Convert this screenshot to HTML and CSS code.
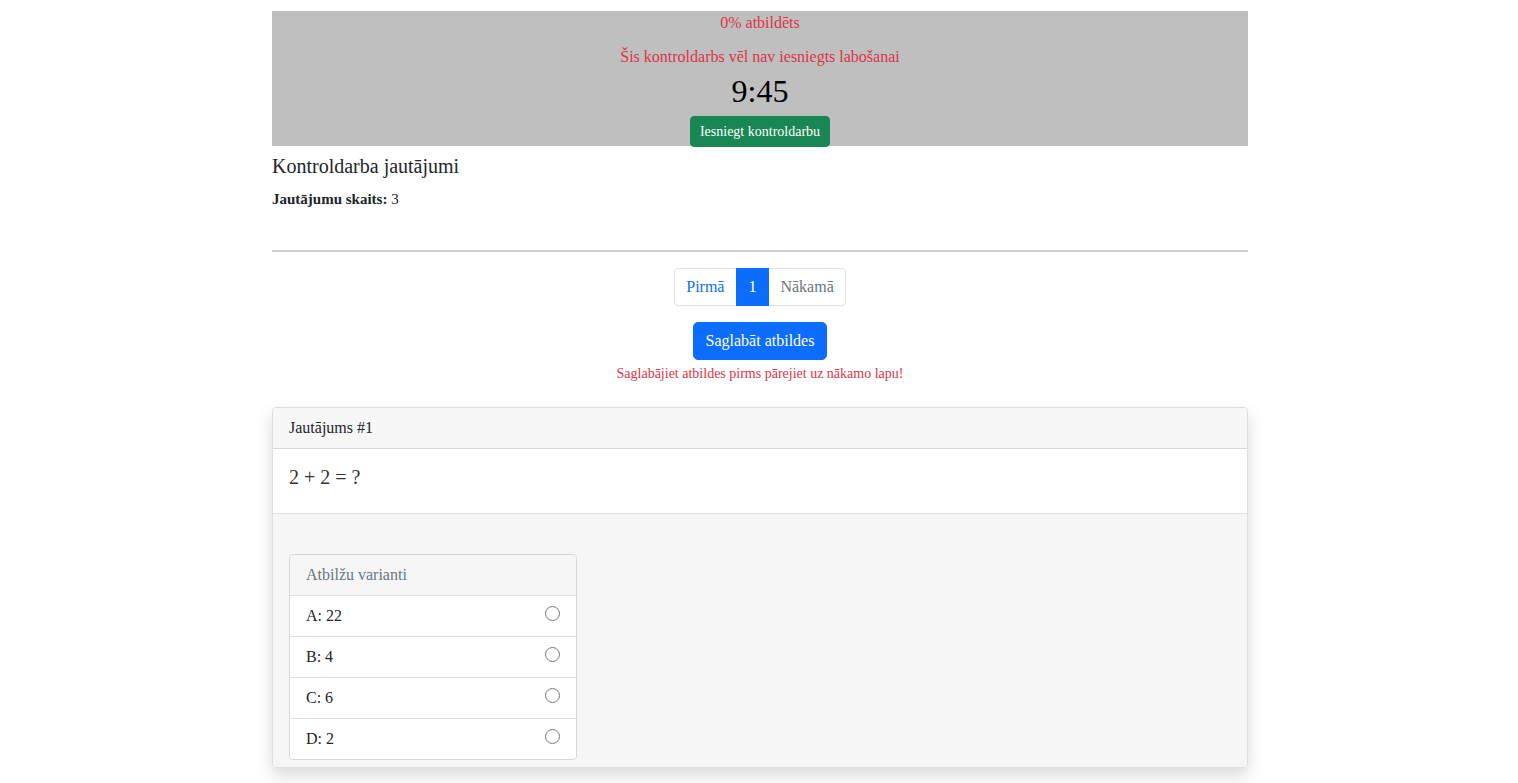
FILE: index.html
```html
<!DOCTYPE html>
<html lang="lv">
<head>
    <meta charset="UTF-8">
    <meta name="viewport" content="width=device-width, initial-scale=1.0">
    <title>Kontroldarbs</title>
    <link rel="stylesheet" href="styles.css">
</head>
<body>
    <div class="container">
        <div class="status-bar">
            <div class="progress-text">0% atbildēts</div>
            <p class="status-text">Šis kontroldarbs vēl nav iesniegts labošanai</p>
            <div class="timer">9:45</div>
            <button class="btn btn-success">Iesniegt kontroldarbu</button>
        </div>

        <h2 class="section-title">Kontroldarba jautājumi</h2>
        <p class="count"><strong>Jautājumu skaits:</strong> 3</p>

        <hr>

        <ul class="pagination">
            <li class="page-item"><a class="page-link" href="#">Pirmā</a></li>
            <li class="page-item active"><a class="page-link" href="#">1</a></li>
            <li class="page-item disabled"><span class="page-link">Nākamā</span></li>
        </ul>

        <div class="save-block">
            <button class="btn btn-primary">Saglabāt atbildes</button>
            <p class="save-hint">Saglabājiet atbildes pirms pārejiet uz nākamo lapu!</p>
        </div>

        <div class="card">
            <div class="card-header">Jautājums #1</div>
            <div class="card-body">
                <p class="question">2 + 2 = ?</p>
            </div>
            <div class="card-answers">
                <ul class="list-group">
                    <li class="list-group-item list-head">Atbilžu varianti</li>
                    <li class="list-group-item"><span>A: 22</span><span class="radio"></span></li>
                    <li class="list-group-item"><span>B: 4</span><span class="radio"></span></li>
                    <li class="list-group-item"><span>C: 6</span><span class="radio"></span></li>
                    <li class="list-group-item"><span>D: 2</span><span class="radio"></span></li>
                </ul>
            </div>
        </div>
    </div>
</body>
</html>
```

FILE: styles.css
```css
* {
    margin: 0;
    padding: 0;
    box-sizing: border-box;
}

body {
    font-family: "Liberation Serif", "Times New Roman", serif;
    font-size: 16px;
    line-height: 1.5;
    color: #212529;
    background: #fff;
}

.container {
    width: 976px;
    margin-left: calc(50% - 487px);
    padding-top: 11px;
    padding-bottom: 40px;
}

/* augšējā josla */
.status-bar {
    background: #bfbfbf;
    text-align: center;
    height: 135px;
}

.progress-text {
    color: #dc3545;
    line-height: 24px;
}

.status-text {
    color: #dc3545;
    margin-top: 10px;
    line-height: 24px;
}

.timer {
    font-size: 32px;
    line-height: 38px;
    color: #000;
    margin-top: 3px;
}

.btn {
    font-family: inherit;
    border: 1px solid transparent;
    border-radius: 4px;
    cursor: pointer;
    color: #fff;
}

.btn-success {
    background: #198754;
    border-color: #198754;
    font-size: 14px;
    line-height: 21px;
    padding: 4px 9px;
    margin-top: 6px;
}

.section-title {
    font-size: 20px;
    font-weight: normal;
    line-height: 24px;
    margin-top: 8px;
}

.count {
    font-size: 15px;
    margin-top: 9px;
    line-height: 24px;
}

hr {
    border: 0;
    border-top: 2px solid #cfcfcf;
    margin-top: 39px;
}

/* lapošana */
.pagination {
    list-style: none;
    display: flex;
    justify-content: center;
    margin-top: 16px;
}

.page-link {
    display: block;
    padding: 6px 11.5px;
    line-height: 24px;
    font-size: 16px;
    color: #0d6efd;
    text-decoration: none;
    border: 1px solid #dee2e6;
    margin-left: -1px;
    background: #fff;
}

.page-item:first-child .page-link {
    border-radius: 4px 0 0 4px;
    margin-left: 0;
}

.page-item:last-child .page-link {
    border-radius: 0 4px 4px 0;
}

.page-item.active .page-link {
    background: #0d6efd;
    border-color: #0d6efd;
    color: #fff;
    position: relative;
    z-index: 1;
}

.page-item.disabled .page-link {
    color: #6c757d;
}

.save-block {
    text-align: center;
    margin-top: 16px;
}

.btn-primary {
    background: #0d6efd;
    border-color: #0d6efd;
    font-size: 16px;
    line-height: 24px;
    padding: 6px 12px;
    border-radius: 5px;
}

.save-hint {
    color: #dc3545;
    font-size: 14px;
    line-height: 21px;
    margin-top: 3px;
}

/* jautājuma kartīte */
.card {
    margin-top: 23px;
    border: 1px solid rgba(0, 0, 0, 0.125);
    border-radius: 4px;
    box-shadow: 0 8px 16px rgba(0, 0, 0, 0.15);
    overflow: hidden;
}

.card-header {
    background: #f7f7f7;
    padding: 8px 16px;
    line-height: 24px;
    border-bottom: 1px solid rgba(0, 0, 0, 0.125);
}

.card-body {
    background: #fff;
    padding: 16px;
    height: 65px;
    border-bottom: 1px solid rgba(0, 0, 0, 0.125);
}

.question {
    font-size: 20px;
    line-height: 24px;
    color: #333;
}

.card-answers {
    background: #f6f6f6;
    padding: 40px 16px 7px;
}

.list-group {
    list-style: none;
    width: 288px;
    border: 1px solid rgba(0, 0, 0, 0.125);
    border-radius: 4px;
    overflow: hidden;
}

.list-group-item {
    display: flex;
    justify-content: space-between;
    align-items: center;
    padding: 8px 16px;
    line-height: 24px;
    background: #fff;
    border-top: 1px solid rgba(0, 0, 0, 0.125);
}

.list-group-item:first-child {
    border-top: 0;
}

.list-head {
    background: #f6f6f6;
    color: #6c757d;
}

.radio {
    width: 15px;
    height: 15px;
    border: 1px solid #777;
    border-radius: 50%;
    margin-top: -6px;
}
```
